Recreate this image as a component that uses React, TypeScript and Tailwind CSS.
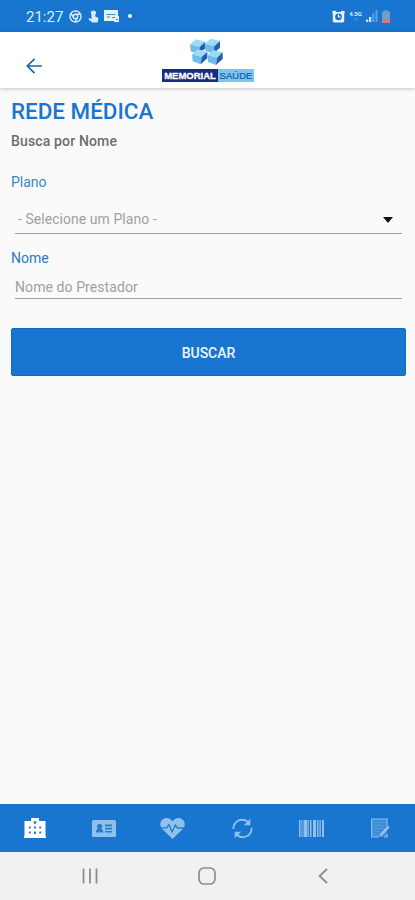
import { useState } from "react";

function StatusBar() {
  return (
    <div className="flex h-8 shrink-0 items-center justify-between bg-[#1976d0] pr-[25px] pl-[26px] text-[#d9ecfb]">
      <div className="flex items-center">
        <span className="w-[43px] pt-0.5 text-[15px] leading-8 whitespace-nowrap">21:27</span>
        <svg className="h-[13px] w-[13px]" viewBox="0 0 13 13" fill="none" stroke="currentColor" strokeWidth="1.4">
          <circle cx="6.5" cy="6.5" r="5.5" />
          <circle cx="6.5" cy="6.5" r="2.2" />
          <path d="M6.5 4.3h5M4.6 7.6 2 3.4M8.3 7.6 6 12" />
        </svg>
        <svg className="ml-[6px] h-[13px] w-[11px]" viewBox="0 0 11 13" fill="currentColor">
          <path d="M5.500.5c1.600 0 2.600 1 2.600 2.300 0 .9-.4 1.400-.9 1.900l.2 1.800 2 .9c.8.3 1.200.9 1 1.700l-.5 2.100c-.2.8-.8 1.300-1.600 1.300H4.300L.6 9.400c0-1 .9-1.500 1.600-1l1.300.6V4.600c-.3-.4-.6-1-.6-1.800C2.900 1.500 3.900.5 5.500.5z" />
        </svg>
        <svg className="ml-[5px] h-[12px] w-[16px]" viewBox="0 0 16 12">
          <path d="M0 0h14v6h1v6h-5v-1H0z" fill="#e2f1fc" />
          <path d="M2.500 4.500h9M3 7h3M8 7.500h3M12 9.500h2" stroke="#3d8ed8" strokeWidth="1.200" />
        </svg>
        <span className="ml-[8px] h-1 w-1 rounded-full bg-white" />
      </div>
      <div className="flex items-center">
        <svg className="h-[13px] w-[13px]" viewBox="0 0 13 13">
          <path d="M0 1.500 3 .5 4.500 2h4L10 .5l3 1-.8 2.500v7.500L11 12.500H2l-1.200-1V4z" fill="#e9f5fd" />
          <circle cx="6.500" cy="6.800" r="3.400" fill="#1976d0" />
          <path d="M6.500 4.500v2.500h2" stroke="#fff" strokeWidth="1.200" fill="none" />
        </svg>
        <div className="ml-[4px] flex w-[13px] flex-col items-center text-[6px] leading-[6px] font-bold">
          <span>4.5G</span>
          <span className="text-[5px] leading-[5px] opacity-60">↓↑</span>
        </div>
        <svg className="ml-[4px] h-[12px] w-[12px]" viewBox="0 0 12 12">
          <path d="M0 9.500h2.200V12H0zM3 7h2.200v5H3z" fill="#d3e8f9" />
          <path d="M6.300 3.500h2V12h-2zM9.500 0h2v12h-2z" fill="#5ba3e0" />
        </svg>
        <svg className="ml-[4px] h-[13px] w-[8px]" viewBox="0 0 8 13">
          <path d="M2.500 0h3v1.500H8V13H0V1.500h2.500z" fill="#6e9fcb" />
          <path d="M0 10.300h8V13H0z" fill="#e67a62" />
        </svg>
      </div>
    </div>
  );
}

function Cube({ x, y }: { x: number; y: number }) {
  return (
    <g transform={`translate(${x} ${y})`}>
      <path d="M0 15 18 0l28 7-17 16z" fill="#9adcf8" />
      <path d="m0 15 29 8-3 22L2 36z" fill="#6fbbea" />
      <path d="m29 23 17-16v20L26 45z" fill="#235fae" />
    </g>
  );
}

function Logo() {
  return (
    <div className="flex w-[92px] flex-col items-center">
      <svg className="h-[30px] w-[38px]" viewBox="15 9 114 90">
        <Cube x={18} y={10} />
        <Cube x={62} y={8} />
        <Cube x={24} y={40} />
        <Cube x={70} y={42} />
      </svg>
      <div className="flex h-[13px] w-[92px] items-center font-['Liberation_Sans'] leading-[13px] whitespace-nowrap">
        <div className="flex h-full w-[56px] items-center justify-center bg-[#172c83] text-[9.500px] font-bold text-white">
          <span className="[-webkit-text-stroke:0.3px_white]">MEMORIAL</span>
        </div>
        <div className="flex h-full w-[36px] items-center justify-center bg-[#76c7f3] text-[9.500px] text-[#20559c]">
          <span className="[-webkit-text-stroke:0.2px_#20559c]">SAÚDE</span>
        </div>
      </div>
    </div>
  );
}

function Header() {
  return (
    <header className="z-10 grid h-14 shrink-0 grid-cols-3 items-center bg-white shadow-[0_1px_4px_rgba(0,0,0,0.22)]">
      <button aria-label="Voltar" className="mt-[12px] ml-[26px] w-4">
        <svg className="h-4 w-4" viewBox="0 0 16 16" fill="none" stroke="#1769ae" strokeWidth="1.700">
          <path d="M16 8H1.500M8.500.8 1.300 8l7.200 7.200" />
        </svg>
      </button>
      <div className="flex justify-center pl-px">
        <Logo />
      </div>
    </header>
  );
}

function HospitalIcon() {
  return (
    <svg className="h-5 w-[22px]" viewBox="0 0 22 20">
      <path d="M7 0h8v3h6.500v15h.5v2H0v-2h.5V3H7z" fill="#fff" />
      <path
        d="M10.300 3h1.400v3h-1.400zM9.500 3.800h3v1.400h-3zM4.800 8.500h2v2h-2zM10 8.500h2v2h-2zM15.200 8.500h2v2h-2zM4.800 13.500h2v2h-2zM10 13.500h2v2.500h-2zM15.200 13.500h2v2h-2z"
        fill="#2880d2"
      />
    </svg>
  );
}

function CardIcon() {
  return (
    <svg className="h-[17px] w-6" viewBox="0 0 24 17">
      <rect width="24" height="17" rx="1.500" fill="#8fc1ec" />
      <path d="M4 12.500c0-2.500 1-3.700 2.200-3.700A2.700 2.700 0 1 1 9 8.800c1.300 0 2.200 1.200 2.200 3.700zM13 4.500h7v1.800h-7zM13 7.700h7v1.700h-7zM13 10.900h7v1.600h-7z" fill="#287dcc" />
    </svg>
  );
}

function HeartIcon() {
  return (
    <svg className="h-[21px] w-[25px]" viewBox="0 0 25 21">
      <path d="M12.500 21 2 10.800C-.4 8.200-.2 4 2.200 1.800 5-.7 9-.5 11.500 2.200l1 1 1-1C16-.5 20-.7 22.800 1.800c2.400 2.200 2.600 6.400.2 9z" fill="#8fc1ec" />
      <path d="M0 9.800h6.500L9 6.500l3 7.500 3.500-7 2 3H25" fill="none" stroke="#2179cd" strokeWidth="1.300" />
    </svg>
  );
}

function SyncIcon() {
  return (
    <svg className="h-[21px] w-[21px]" viewBox="0 0 21 21">
      <path d="M1.300 11C1.300 5.500 5 1.800 10 1.800c3 0 5.300 1.300 7 3.500M19.700 10c0 5.500-3.700 9.200-8.700 9.200-3 0-5.300-1.300-7-3.500" fill="none" stroke="#8fc1ec" strokeWidth="1.900" />
      <path d="M18.300.8v6.500h-6.500zM2.700 20.200v-6.500h6.500z" fill="#8fc1ec" />
    </svg>
  );
}

function BarcodeIcon() {
  return (
    <svg className="h-[17px] w-[25px]" viewBox="0 0 25 17" fill="#8fc1ec">
      <path d="M0 0h1.500v17H0zM2.500 0h1v17h-1zM4.500 0h4v17h-4zM9.300 0h.8v17h-.8zM11 0h1.500v17H11zM14 0h3v17h-3zM18 0h1.500v17H18zM20.500 0h1.300v17h-1.300zM23 0h2v17h-2z" />
    </svg>
  );
}

function NoteIcon() {
  return (
    <svg className="h-5 w-[19px]" viewBox="0 0 19 20" fill="none" stroke="#8fc1ec">
      <path d="M1 1h15v18H1z" fill="#8fc1ec" fillOpacity=".3" stroke="none" />
      <path d="M16 8V1H.7v18H8M16 16v3h-3" strokeWidth="1.200" />
      <path d="M3 4.500h11M3 7.500h11M3 10.500h9M3 13.500h6M3 16.500h4" strokeWidth="1" opacity=".3" />
      <path d="m17.800 8.500-7.500 8" strokeWidth="2.600" />
      <path d="m9.500 15-1.200 3.800 3.600-1.500z" fill="#8fc1ec" stroke="none" />
    </svg>
  );
}

const tabs = [
  { name: "Rede Médica", Icon: HospitalIcon },
  { name: "Carteirinha", Icon: CardIcon },
  { name: "Saúde", Icon: HeartIcon },
  { name: "Atualizar", Icon: SyncIcon },
  { name: "Boletos", Icon: BarcodeIcon },
  { name: "Solicitações", Icon: NoteIcon },
];

function TabBar() {
  return (
    <nav className="grid h-12 shrink-0 grid-cols-6 bg-[#1976d0]">
      {tabs.map(({ name, Icon }) => (
        <button key={name} aria-label={name} className="flex items-center justify-center">
          <Icon />
        </button>
      ))}
    </nav>
  );
}

function SystemNav() {
  return (
    <div className="flex h-12 shrink-0 items-center justify-between bg-[#f1f1f1] pr-[87px] pl-[82px]">
      <svg className="h-4 w-4" viewBox="0 0 16 16" stroke="#8d8d8d" strokeWidth="1.800">
        <path d="M1.500.5v15M8 .5v15M14.500.5v15" />
      </svg>
      <svg className="mr-[3px] h-[18px] w-[18px]" viewBox="0 0 18 18" fill="none" stroke="#8d8d8d" strokeWidth="1.700">
        <rect x="1" y="1" width="16" height="16" rx="5" />
      </svg>
      <svg className="h-4 w-[10px]" viewBox="0 0 10 16" fill="none" stroke="#8d8d8d" strokeWidth="1.800">
        <path d="M9 1 1.500 8 9 15" />
      </svg>
    </div>
  );
}

export default function App() {
  const [nome, setNome] = useState("");

  return (
    <div className="flex h-[900px] w-full flex-col overflow-hidden bg-[#fafafa] font-['Roboto',sans-serif]">
      <StatusBar />
      <Header />

      <main className="flex flex-1 flex-col pr-[9px] pl-[11px]">
        <h1 className="mt-[7px] text-[22.400px] leading-8 font-medium text-[#1976d0]">REDE MÉDICA</h1>
        <h2 className="mt-[4px] text-[14px] leading-5 font-medium tracking-[0.15px] text-[#6d6d6d]">Busca por Nome</h2>

        {/* Plano */}
        <label className="mt-[21px] text-[14px] leading-5 text-[#3c87c8]">Plano</label>
        <button className="mr-[4px] ml-[4px] flex h-[42px] items-center justify-between border-b border-[#a2a2a2] pt-[14px] pr-[9px] pl-[3px] text-left text-[14px] tracking-[0.05px] text-[#a0a0a0]">
          <span>- Selecione um Plano -</span>
          <svg className="h-[6px] w-[10px]" viewBox="0 0 10 6">
            <path d="M0 0h10L5 6z" fill="#111" />
          </svg>
        </button>

        {/* Nome */}
        <label className="mt-[14px] text-[14px] leading-5 text-[#2b7abf]">Nome</label>
        <input
          className="mr-[4px] ml-[4px] h-[31px] border-b border-[#a2a2a2] pt-[7px] text-[14px] tracking-[0.08px] outline-none placeholder:text-[#a0a0a0]"
          placeholder="Nome do Prestador"
          value={nome}
          onChange={(e) => setNome(e.target.value)}
        />

        <button className="mt-[29px] h-12 rounded-[2px] border border-[#126cc1] bg-[#1976d0] pt-0.5 text-[14px] font-medium text-[#eef7ff]">
          BUSCAR
        </button>
      </main>

      <TabBar />
      <SystemNav />
    </div>
  );
}
